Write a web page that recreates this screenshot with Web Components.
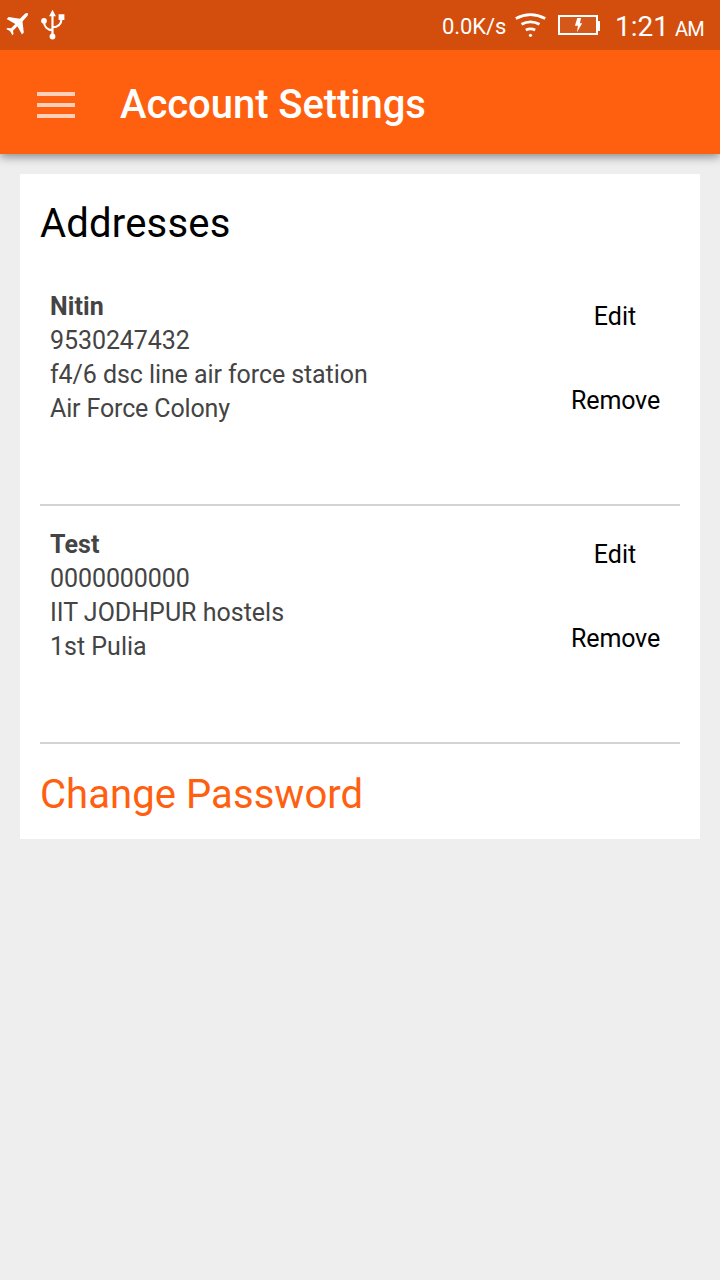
<!DOCTYPE html>
<html lang="en">
<head>
<meta charset="utf-8">
<title>Account Settings</title>
<style>
html, body { margin: 0; height: 100%; background: #eee; }
body { font-family: Roboto, "Noto Sans", sans-serif; overflow: hidden; }
</style>
</head>
<body>
<settings-page></settings-page>
<script>
const define = (name, html) => {
  const template = document.createElement('template');
  template.innerHTML = html;
  customElements.define(name, class extends HTMLElement {
    constructor() {
      super();
      this.attachShadow({ mode: 'open' }).append(template.content.cloneNode(true));
    }
  });
};

define('status-bar', `
<style>
:host { display: flex; box-sizing: border-box; height: 50px; background: #d34e0d; color: #fff; white-space: nowrap; position: relative; z-index: 2; }
svg { display: block; flex: none; }
.space { flex: 1; }
.rate { font-size: 22px; letter-spacing: -.1px; line-height: 26px; margin-top: 14px; width: 73px; }
.time { font-size: 28px; line-height: 34px; margin: 10px 0 0 15px; width: 60px; }
.ampm { font-size: 20px; letter-spacing: -.8px; line-height: 24px; margin-top: 17px; width: 45px; }
</style>
<svg width="80" height="50" viewBox="0 0 80 50">
  <path fill="#fff" d="M27.7 13.2c.7.8.2 2.2-.6 3.1l-4.6 5.3 1.3 10.8-1.8 2-4.6-8.1-4.4 4.4.5 3.3-1.2 1.2-2.1-4-3.9-2.1 1.2-1.2 3.5.4 4.3-4.4-8.6-5 1.9-1.8 11.3 1.7 4.8-4.8c1-.9 2.4-1.5 3-.8z"/>
  <path fill="none" stroke="#fff" stroke-width="2.2" d="M52.5 15v21M44 20v1c0 6 3.5 9.2 8.5 9.2M61.5 17v1.5c0 5.5-3.5 8.8-9 8.8"/>
  <path fill="#fff" d="M52.5 9.8l3.4 6.4h-6.8zM58.6 14.3h5.8v5.6h-5.8z"/>
  <circle fill="#fff" cx="44" cy="20.8" r="2.9"/><circle fill="#fff" cx="52.5" cy="36.5" r="2.9"/>
</svg>
<div class="space"></div>
<span class="rate">0.0K/s</span>
<svg width="85" height="50" viewBox="515 0 85 50">
  <g fill="none" stroke="#fff" stroke-width="2.8">
    <path d="M515.8 18.5q14.7-7.6 29.4 0M521.5 24.3q9-4.8 18 0M525.8 29.9q4.7-2.2 9.4 0"/>
    <path stroke-width="2" d="M559 16h38v18h-38z" fill="#fff" fill-opacity=".06"/>
  </g>
  <circle fill="#fff" cx="530.5" cy="35.3" r="1.6"/>
  <path fill="#fff" d="M598 21h2v10h-2zM577.3 18h3.8l-1.3 5.2h2.4l-5.3 9 1.1-6.5h-3.1z"/>
</svg>
<span class="time">1:21</span><span class="ampm">AM</span>
`);

define('app-bar', `
<style>
:host { display: flex; box-sizing: border-box; height: 104px; padding: 0 37px; align-items: center; background: #ff6010; color: #fff; box-shadow: 0 3px 9px rgba(0,0,0,.42); position: relative; }
svg { display: block; margin: 6px 45px 0 0; flex: none; }
h1 { margin: 0; padding-top: 6px; font-size: 40px; letter-spacing: -.06px; font-weight: 500; line-height: 48px; white-space: nowrap; }
</style>
<svg width="38" height="26" viewBox="0 0 38 26"><path fill="#fff" fill-opacity=".7" d="M0 0h38v4H0zM0 11h38v4H0zM0 22h38v4H0z"/></svg>
<h1><slot></slot></h1>
`);

define('address-row', `
<style>
:host { display: flex; box-sizing: border-box; height: 238px; border-bottom: 2px solid #d3d3d3; padding: 22px 0 0 10px; font-size: 25px; letter-spacing: -.08px; line-height: 34px; white-space: nowrap; }
.details { flex: 1; display: flex; flex-direction: column; color: #444; }
.name { font-weight: 700; letter-spacing: .1px; }
.actions { width: 129px; display: flex; flex-direction: column; align-items: center; gap: 50px; padding-top: 10px; color: #000; letter-spacing: -.15px; }
.edit { letter-spacing: 0; margin-right: 1px; }
</style>
<div class="details"><span class="name"><slot name="name"></slot></span><slot name="phone"></slot><slot name="street"></slot><slot name="area"></slot></div>
<div class="actions"><span class="edit">Edit</span><span>Remove</span></div>
`);

define('settings-card', `
<style>
:host { display: block; box-sizing: border-box; height: 665px; margin: 20px 20px 0; padding: 26px 20px 0; background: #fff; font-size: 40px; line-height: 47px; }
h2 { margin: 0 0 21px; font: inherit; letter-spacing: .2px; color: #000; }
.password { margin-top: 27px; letter-spacing: .07px; color: #ff6010; }
</style>
<h2>Addresses</h2>
<slot></slot>
<div class="password">Change Password</div>
`);

define('settings-page', `
<style>
:host { display: flex; flex-direction: column; height: 100vh; background: #eee; }
.plain { letter-spacing: 0; }
.tight { letter-spacing: -.14px; }
</style>
<status-bar></status-bar>
<app-bar>Account Settings</app-bar>
<settings-card>
  <address-row><span slot="name">Nitin</span><span slot="phone">9530247432</span><span slot="street">f4/6 dsc line air force station</span><span slot="area" class="tight">Air Force Colony</span></address-row>
  <address-row><span slot="name">Test</span><span slot="phone">0000000000</span><span slot="street" class="plain">IIT JODHPUR hostels</span><span slot="area" class="plain">1st Pulia</span></address-row>
</settings-card>
`);
</script>
</body>
</html>
